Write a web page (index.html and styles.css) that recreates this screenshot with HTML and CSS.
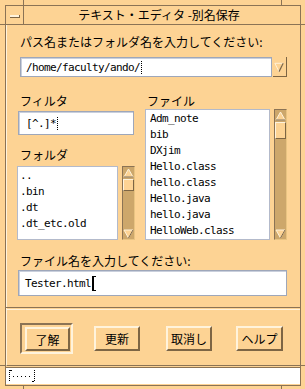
FILE: index.html
```html
<!DOCTYPE html>
<html lang="ja">
<head>
    <meta charset="UTF-8">
    <title>テキスト・エディタ -別名保存</title>
    <link rel="stylesheet" href="styles.css">
</head>
<body>
    <div class="screen">
        <div class="window">
            <div class="titlebar">
                <div class="menu-btn"><span></span></div>
                <div class="title">テキスト・エディタ -別名保存</div>
            </div>

            <div class="dialog">
                <div class="label label-path">パス名またはフォルダ名を入力してください:</div>
                <div class="path-row">
                    <div class="field path-field mono">/home/faculty/ando/<span class="caret"></span></div>
                    <div class="drop-btn">
                        <svg width="14" height="20" viewBox="0 0 14 20">
                            <polygon points="2,6 11,6 6.5,15" fill="#fdd394" stroke="#fff3dc" stroke-width="1"/>
                            <line x1="11" y1="6" x2="6.5" y2="15" stroke="#7d6544" stroke-width="1.3"/>
                        </svg>
                    </div>
                </div>

                <div class="columns">
                    <div class="col-left">
                        <div class="label">フィルタ</div>
                        <div class="field filter-field mono">[^.]*<span class="caret"></span></div>
                        <div class="label label-folder">フォルダ</div>
                        <div class="list-row folder-row">
                            <div class="list folder-list mono">
                                <div>..</div>
                                <div>.bin</div>
                                <div>.dt</div>
                                <div>.dt_etc.old</div>
                            </div>
                            <div class="scrollbar">
                                <div class="sb-arrow">
                                    <svg width="11" height="10" viewBox="0 0 11 10"><polygon points="1,9 5.5,1 10,9" fill="#fdd394" stroke="#fff3dc"/><line x1="1" y1="9" x2="10" y2="9" stroke="#7d6544"/></svg>
                                </div>
                                <div class="sb-thumb short"></div>
                                <div class="sb-trough"></div>
                                <div class="sb-arrow">
                                    <svg width="11" height="10" viewBox="0 0 11 10"><polygon points="1,1 10,1 5.5,9" fill="#fdd394" stroke="#fff3dc"/><line x1="10" y1="1" x2="5.5" y2="9" stroke="#7d6544"/></svg>
                                </div>
                            </div>
                        </div>
                    </div>

                    <div class="col-right">
                        <div class="label">ファイル</div>
                        <div class="list-row file-row">
                            <div class="list file-list mono">
                                <div>Adm_note</div>
                                <div>bib</div>
                                <div>DXjim</div>
                                <div>Hello.class</div>
                                <div>hello.class</div>
                                <div>Hello.java</div>
                                <div>hello.java</div>
                                <div>HelloWeb.class</div>
                            </div>
                            <div class="scrollbar">
                                <div class="sb-arrow">
                                    <svg width="11" height="10" viewBox="0 0 11 10"><polygon points="1,9 5.5,1 10,9" fill="#fdd394" stroke="#fff3dc"/><line x1="1" y1="9" x2="10" y2="9" stroke="#7d6544"/></svg>
                                </div>
                                <div class="sb-thumb"></div>
                                <div class="sb-trough"></div>
                                <div class="sb-arrow">
                                    <svg width="11" height="10" viewBox="0 0 11 10"><polygon points="1,1 10,1 5.5,9" fill="#fdd394" stroke="#fff3dc"/><line x1="10" y1="1" x2="5.5" y2="9" stroke="#7d6544"/></svg>
                                </div>
                            </div>
                        </div>
                    </div>
                </div>

                <div class="label label-name">ファイル名を入力してください:</div>
                <div class="field name-field mono">Tester.html<span class="ibeam"></span></div>

                <div class="separator"></div>

                <div class="buttons">
                    <div class="default-frame"><button class="btn btn-ok" type="button">了解</button></div>
                    <button class="btn btn-update" type="button">更新</button>
                    <button class="btn btn-cancel" type="button">取消し</button>
                    <button class="btn btn-help" type="button">ヘルプ</button>
                </div>
            </div>

            <div class="status">
                <div class="status-box">
                    <svg width="30" height="14" viewBox="0 0 30 14">
                        <line x1="2.5" y1="1" x2="2.5" y2="13" stroke="#000" stroke-dasharray="1 1"/>
                        <line x1="3" y1="1.5" x2="5" y2="1.5" stroke="#000"/>
                        <line x1="6" y1="7.5" x2="24" y2="7.5" stroke="#000" stroke-dasharray="1 3"/>
                        <line x1="27.5" y1="1" x2="27.5" y2="13" stroke="#000" stroke-dasharray="1 1"/>
                        <line x1="25" y1="12.5" x2="27" y2="12.5" stroke="#000"/>
                    </svg>
                </div>
            </div>
        </div>
    </div>
</body>
</html>
```

FILE: styles.css
```css
body {
    margin: 0;
    background: #fdd394;
    font-family: "Noto Sans CJK JP", "Noto Sans", sans-serif;
    font-size: 12px;
    color: #000;
}
.screen {
    width: 305px;
    height: 389px;
    box-sizing: border-box;
    padding: 5px 4px 3px 5px;
    background-color: #fdd394;
    background-image:
        linear-gradient(#8b7355, #8b7355),
        linear-gradient(#8b7355, #8b7355),
        linear-gradient(#8b7355, #8b7355),
        linear-gradient(#8b7355, #8b7355),
        linear-gradient(#8b7355, #8b7355),
        linear-gradient(#8b7355, #8b7355),
        linear-gradient(#8b7355, #8b7355),
        linear-gradient(#8b7355, #8b7355);
    background-repeat: no-repeat;
    background-size: 1px 5px, 1px 5px, 1px 4px, 1px 4px, 5px 1px, 5px 1px, 5px 1px, 5px 1px;
    background-position: 23px 0, 281px 0, 23px 385px, 281px 385px, 0 24px, 300px 24px, 0 365px, 300px 365px;
}
.window {
    height: 381px;
    box-sizing: border-box;
    border: 1px solid #8b7355;
    display: flex;
    flex-direction: column;
}
.titlebar {
    height: 18px;
    border-bottom: 1px solid #8b7355;
    display: flex;
    flex-shrink: 0;
}
.menu-btn {
    width: 17px;
    border-right: 1px solid #8b7355;
    display: flex;
    align-items: center;
    justify-content: center;
}
.menu-btn span {
    width: 9px;
    height: 2px;
    background: #fff3dc;
    border-bottom: 1px solid #7d6544;
    border-right: 1px solid #7d6544;
    margin-top: 2px;
}
.title {
    flex: 1;
    text-align: center;
    line-height: 18px;
    padding-right: 6px;
}
.dialog {
    height: 341px;
    box-sizing: border-box;
    flex-shrink: 0;
    border-bottom: 1px solid #8b7355;
    border-left: 1px solid #fff3dc;
    padding: 0 13px 0 11px;
}
.label {
    line-height: 14px;
    height: 14px;
    margin-left: 2px;
    white-space: nowrap;
}
.label-path {
    padding-top: 10px;
}
.mono {
    font-family: "DejaVu Sans Mono", "Liberation Mono", monospace;
    font-size: 11px;
    letter-spacing: -0.62px;
}
.field {
    background: #fff;
    border: 1px solid #9ea7ba;
    box-shadow: inset 1px 1px 0 #c9cfdc;
    box-sizing: border-box;
    display: flex;
    align-items: center;
    padding-left: 5px;
}
.path-row {
    display: flex;
    margin-top: 8px;
    height: 20px;
}
.path-field {
    width: 252px;
    margin-left: 2px;
}
.caret {
    display: inline-block;
    width: 0;
    height: 13px;
    border-left: 1px dotted #000;
    margin-left: 1px;
}
.drop-btn {
    width: 14px;
    margin-left: 1px;
    box-sizing: border-box;
    border-right: 1px solid #7d6544;
    border-bottom: 1px solid #7d6544;
    display: flex;
}
.columns {
    display: flex;
    margin-top: 17px;
    gap: 10px;
}
.col-left {
    width: 117px;
}
.col-right {
    width: 142px;
}
.filter-field {
    margin-top: 3px;
    height: 24px;
    width: 116px;
    padding-left: 7px;
}
.label-folder {
    margin-top: 13px;
}
.list-row {
    display: flex;
}
.folder-row {
    margin-top: 4px;
    height: 74px;
    margin-left: -1px;
    gap: 4px;
}
.file-row {
    margin-top: 1px;
    height: 131px;
    gap: 4px;
}
.list {
    background: #fff;
    border: 1px solid #b3bacb;
    box-sizing: border-box;
    line-height: 16px;
    white-space: nowrap;
    overflow: hidden;
}
.folder-list {
    width: 101px;
    padding: 1px 0 0 2px;
}
.file-list {
    width: 125px;
    padding: 1px 0 0 4px;
}
.scrollbar {
    width: 13px;
    box-sizing: border-box;
    background: #cda76b;
    border: 1px solid #8b7355;
    border-right-color: #e9c482;
    border-bottom-color: #e9c482;
    display: flex;
    flex-direction: column;
}
.sb-arrow {
    height: 11px;
    display: flex;
    align-items: center;
    justify-content: center;
    flex-shrink: 0;
}
.sb-thumb {
    height: 17px;
    margin-top: 1px;
    background: #fdd394;
    border-top: 1px solid #fff3dc;
    border-left: 1px solid #fff3dc;
    border-bottom: 1px solid #7d6544;
    border-right: 1px solid #7d6544;
    box-sizing: border-box;
    flex-shrink: 0;
}
.sb-thumb.short {
    height: 12px;
}
.sb-trough {
    flex: 1;
}
.label-name {
    margin-top: 14px;
}
.name-field {
    margin-top: 2px;
    height: 26px;
    padding-left: 6px;
}
.ibeam {
    display: inline-block;
    width: 4px;
    height: 15px;
    box-sizing: border-box;
    border-top: 1px solid #000;
    border-bottom: 1px solid #000;
    background: linear-gradient(#000, #000) 0 0 / 2px 100% no-repeat;
    margin-left: 1px;
}
.separator {
    margin: 11px -13px 0 -12px;
    height: 1px;
    border-top: 1px solid #8b7355;
    border-bottom: 1px solid #fff3dc;
}
.buttons {
    display: flex;
    align-items: center;
    margin-top: 13px;
    height: 31px;
}
.default-frame {
    margin-left: 2px;
    width: 53px;
    height: 31px;
    box-sizing: border-box;
    border: 2px solid #8b7355;
    border-right-color: #fff3dc;
    border-bottom-color: #fff3dc;
    padding: 2px 2px 1px 3px;
}
.btn {
    font-family: "Noto Sans CJK JP", sans-serif;
    font-size: 12px;
    color: #000;
    background: #fdd394;
    height: 25px;
    padding: 0;
    box-sizing: border-box;
    border: 2px solid #7d6544;
    border-top-color: #fff3dc;
    border-left-color: #fff3dc;
    border-radius: 0;
}
.btn-ok {
    width: 45px;
    height: 24px;
}
.btn-update {
    margin-left: 21px;
    width: 46px;
}
.btn-cancel {
    margin-left: 26px;
    width: 46px;
}
.btn-help {
    margin-left: 24px;
    width: 47px;
}
.status {
    flex: 1;
    padding: 1px 0 1px 0;
    box-sizing: border-box;
}
.status-box {
    height: 17px;
    background: #fff;
    border-top: 1px solid #8b7355;
    box-sizing: border-box;
    display: flex;
    align-items: center;
    padding-left: 1px;
}
```
